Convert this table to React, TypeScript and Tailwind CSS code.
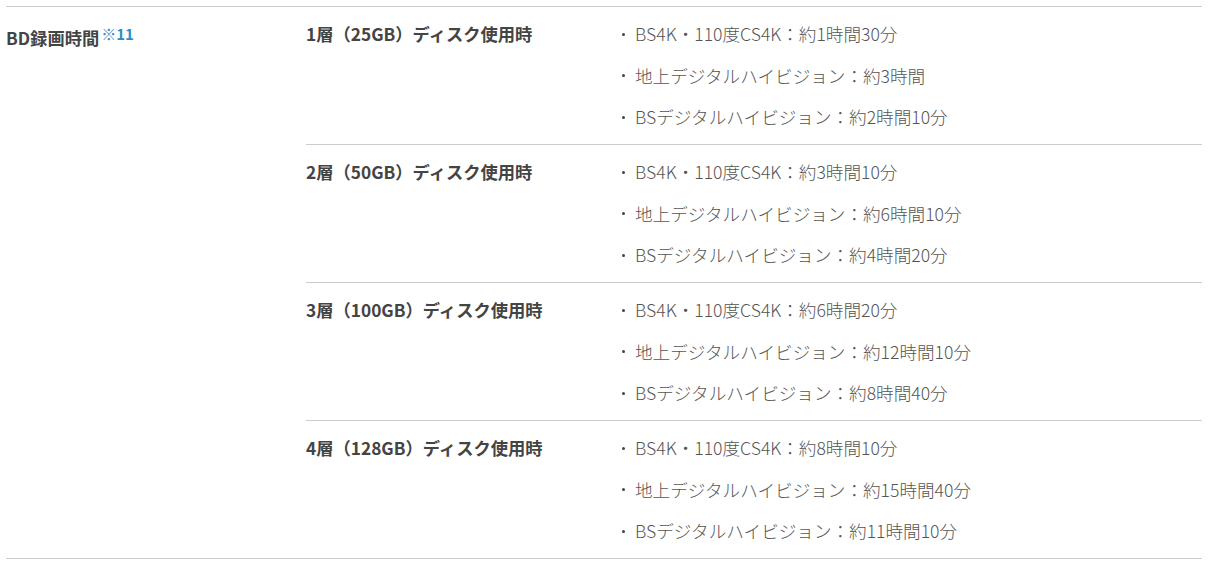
import React from "react";

const groups = [
  {
    label: "1層（25GB）ディスク使用時",
    items: [
      "BS4K・110度CS4K：約1時間30分",
      "地上デジタルハイビジョン：約3時間",
      "BSデジタルハイビジョン：約2時間10分",
    ],
  },
  {
    label: "2層（50GB）ディスク使用時",
    items: [
      "BS4K・110度CS4K：約3時間10分",
      "地上デジタルハイビジョン：約6時間10分",
      "BSデジタルハイビジョン：約4時間20分",
    ],
  },
  {
    label: "3層（100GB）ディスク使用時",
    items: [
      "BS4K・110度CS4K：約6時間20分",
      "地上デジタルハイビジョン：約12時間10分",
      "BSデジタルハイビジョン：約8時間40分",
    ],
  },
  {
    label: "4層（128GB）ディスク使用時",
    items: [
      "BS4K・110度CS4K：約8時間10分",
      "地上デジタルハイビジョン：約15時間40分",
      "BSデジタルハイビジョン：約11時間10分",
    ],
  },
];

export default function App() {
  return (
    <div
      className="bg-white w-[1213px] h-[565px] pt-[6px] pl-[6px]"
      style={{ fontFamily: '"Noto Sans CJK JP", "Noto Sans", sans-serif' }}
    >
      <div className="w-[1196px] flex border-t border-b border-[#cccccc]">
        <div className="w-[300px] shrink-0 pt-[17px] text-[17.3px] leading-[28px] font-bold text-[#444444]">
          BD録画時間
          <sup className="text-[15px] text-[#2a8fc4] font-bold ml-[2px] relative top-[-5px]">※11</sup>
        </div>
        <div className="flex-1">
          {groups.map((g, i) => (
            <div
              key={i}
              className={`flex pt-[13px] pb-[13px] ${i > 0 ? "border-t border-[#cccccc]" : ""}`}
            >
              <div className="w-[314px] shrink-0 text-[17.3px] leading-[28px] font-bold text-[#444444]">
                {g.label}
              </div>
              <ul className="flex flex-col gap-[13.5px]">
                {g.items.map((t, j) => (
                  <li key={j} className="flex items-center text-[17.6px] leading-[28px] font-light text-[#555555]">
                    <span className="w-[3px] h-[3px] rounded-full bg-[#444444] ml-[2px] mr-[10px]" />
                    {t}
                  </li>
                ))}
              </ul>
            </div>
          ))}
        </div>
      </div>
    </div>
  );
}
